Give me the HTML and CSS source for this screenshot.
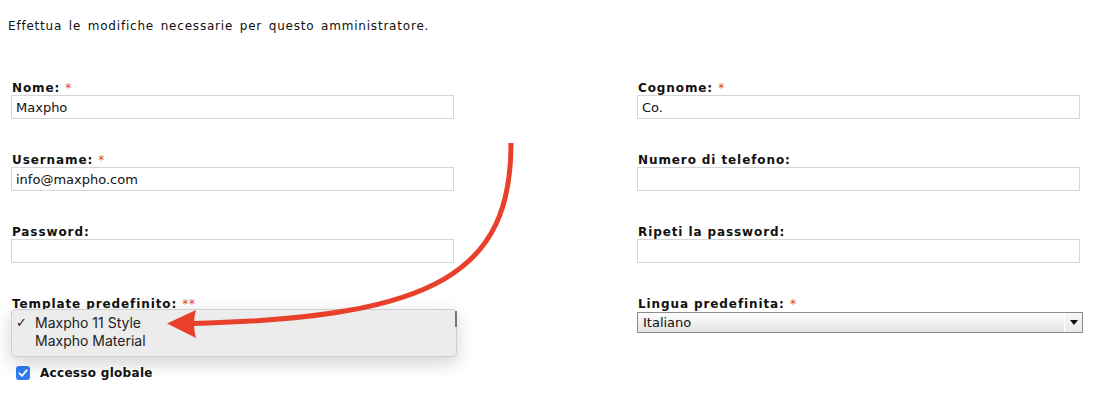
FILE: index.html
```html
<!DOCTYPE html>
<html lang="it">
<head>
    <meta charset="UTF-8">
    <meta name="viewport" content="width=device-width, initial-scale=1.0">
    <title>Modifica amministratore</title>
    <link rel="stylesheet" href="styles.css">
</head>
<body>
    <p class="intro">Effettua le modifiche necessarie per questo amministratore.</p>

    <form class="admin-form" action="#" method="post">
        <div class="field">
            <label for="nome">Nome: <span class="req">*</span></label>
            <input type="text" id="nome" name="nome" value="Maxpho">
        </div>
        <div class="field">
            <label for="cognome">Cognome: <span class="req">*</span></label>
            <input type="text" id="cognome" name="cognome" value="Co.">
        </div>

        <div class="field">
            <label for="username">Username: <span class="req">*</span></label>
            <input type="text" id="username" name="username" value="info@maxpho.com">
        </div>
        <div class="field">
            <label for="telefono">Numero di telefono:</label>
            <input type="text" id="telefono" name="telefono">
        </div>

        <div class="field">
            <label for="password">Password:</label>
            <input type="password" id="password" name="password">
        </div>
        <div class="field">
            <label for="password2">Ripeti la password:</label>
            <input type="password" id="password2" name="password2">
        </div>

        <div class="field">
            <label>Template predefinito: <span class="req">**</span></label>
            <div class="select-wrap open">
                <div class="select-box"><span class="select-text"></span><span class="select-btn"></span></div>
                <ul class="dropdown">
                    <li class="selected"><span class="check">&#10003;</span>Maxpho 11 Style</li>
                    <li><span class="check"></span>Maxpho Material</li>
                </ul>
            </div>
        </div>
        <div class="field">
            <label>Lingua predefinita: <span class="req">*</span></label>
            <div class="select-wrap">
                <div class="select-box"><span class="select-text">Italiano</span><span class="select-btn"></span></div>
            </div>
        </div>

        <div class="global-access">
            <span class="checkbox">
                <svg viewBox="0 0 14 14" width="14" height="14"><path d="M3.3 7.2 L6 9.8 L10.8 4.2" fill="none" stroke="#fff" stroke-width="1.8" stroke-linecap="round" stroke-linejoin="round"/></svg>
            </span>
            <span class="check-label">Accesso globale</span>
        </div>
    </form>

    <svg class="arrow" width="1100" height="396" viewBox="0 0 1100 396">
        <path d="M511 143 C511 270 440 318 192 323.5" fill="none" stroke="#e8402a" stroke-width="5"/>
        <path d="M167 323.5 L196 310 Q192 323.5 196 338 Z" fill="#e8402a"/>
    </svg>
</body>
</html>
```

FILE: styles.css
```css
body {
    margin: 0;
    font-family: "DejaVu Sans", Verdana, sans-serif;
    color: #111;
    background-color: #fff;
    position: relative;
    height: 396px;
    overflow: hidden;
}
.intro {
    margin: 19px 0 0 8px;
    font-size: 12px;
    line-height: 15px;
    word-spacing: 2px;
    letter-spacing: 0.8px;
}
.admin-form {
    display: grid;
    grid-template-columns: 446px 446px;
    column-gap: 180px;
    row-gap: 34px;
    margin: 47px 0 0 11px;
}
.field label {
    display: block;
    height: 14px;
    line-height: 14px;
    padding-left: 1px;
    font-size: 12px;
    font-weight: bold;
    letter-spacing: 0.9px;
}
.req {
    color: #ee3b2f;
    font-weight: normal;
}
.field input[type="text"], .field input[type="password"] {
    display: block;
    box-sizing: border-box;
    width: 443px;
    height: 24px;
    margin: 0;
    padding: 0 4px;
    border: 1px solid #d6d6d6;
    border-radius: 0;
    font-family: "DejaVu Sans", sans-serif;
    font-size: 13px;
    color: #111;
    outline: none;
}
.select-wrap {
    position: relative;
    margin-top: 1px;
}
.select-box {
    display: flex;
    box-sizing: border-box;
    height: 21px;
    border: 1px solid #8c8c8c;
    background: linear-gradient(#fdfdfd, #e4e4e4);
    font-size: 13px;
    line-height: 19px;
}
.select-text {
    flex: 1;
    padding-left: 5px;
}
.select-btn {
    position: relative;
    width: 17px;
    border-left: 1px solid #fff;
    background: linear-gradient(#f7f7f7, #e9e9e9);
}
.select-btn::after {
    content: "";
    position: absolute;
    left: 5px;
    top: 7px;
    border-left: 4px solid transparent;
    border-right: 4px solid transparent;
    border-top: 5px solid #111;
}
.dropdown {
    position: absolute;
    top: -3px;
    left: 0;
    width: 446px;
    box-sizing: border-box;
    height: 48px;
    margin: 0;
    padding: 4px 0 0;
    list-style: none;
    background-color: #ececec;
    border: 1px solid #cfcfcf;
    border-radius: 5px;
    box-shadow: 0 6px 18px rgba(0, 0, 0, 0.18);
    font-family: Inter, "Noto Sans", sans-serif;
    font-size: 14px;
    color: #222;
}
.dropdown::after {
    content: "";
    position: absolute;
    right: -1px;
    top: 1px;
    width: 2px;
    height: 16px;
    background-color: #777;
}
.dropdown li {
    display: flex;
    align-items: center;
    height: 18px;
    line-height: 18px;
}
.check {
    box-sizing: border-box;
    width: 23px;
    padding-left: 4px;
    font-family: "DejaVu Sans", sans-serif;
    font-size: 13px;
    font-weight: bold;
}
.global-access {
    grid-column: 1 / 3;
    display: flex;
    align-items: center;
    gap: 10px;
    margin-top: -1px;
    padding-left: 5px;
}
.checkbox {
    display: flex;
    width: 14px;
    height: 14px;
    border-radius: 3px;
    background-color: #2f7cf6;
}
.check-label {
    font-size: 12px;
    font-weight: bold;
    letter-spacing: 0.3px;
}
.arrow {
    position: absolute;
    left: 0;
    top: 0;
    pointer-events: none;
}
```
